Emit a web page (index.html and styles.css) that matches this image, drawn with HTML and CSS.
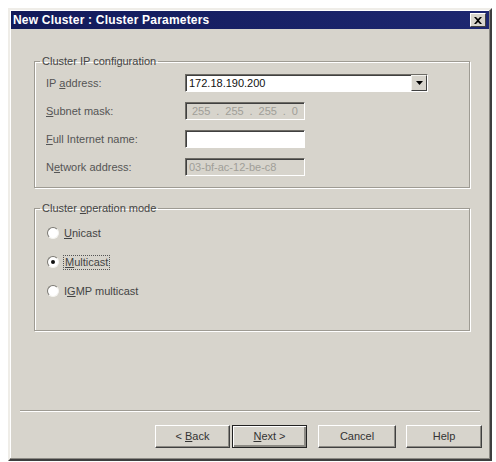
FILE: index.html
```html
<html>

<head>
  <meta charset="utf8">
  <title>New Cluster : Cluster Parameters</title>
  <link rel="stylesheet" href="styles.css">
</head>

<body>
  <div class="window">
    <div class="titlebar">
      <span class="title">New Cluster : Cluster Parameters</span>
      <span class="close">
        <svg width="8" height="7" viewBox="0 0 8 7"><path d="M0 0h2l2 2 2-2h2L5 3.5 8 7H6L4 5 2 7H0l3-3.5z" fill="#000"/></svg>
      </span>
    </div>
    <div class="content">
      <fieldset class="group">
        <legend>Cluster IP configuration</legend>
        <div class="rows">
          <label>IP <u>a</u>ddress:</label>
          <div class="combo">
            <span class="value">172.18.190.200</span>
            <span class="drop"><svg width="7" height="4" viewBox="0 0 7 4"><path d="M0 0h7L3.5 4z" fill="#000"/></svg></span>
          </div>
          <label><u>S</u>ubnet mask:</label>
          <div class="field disabled ip"><span>255</span>.<span>255</span>.<span>255</span>.<span>0</span></div>
          <label><u>F</u>ull Internet name:</label>
          <div class="field"></div>
          <label>N<u>e</u>twork address:</label>
          <div class="field disabled">03-bf-ac-12-be-c8</div>
        </div>
      </fieldset>
      <fieldset class="group modes">
        <legend>Cluster <u>o</u>peration mode</legend>
        <div class="radios">
          <div class="radio"><span class="dot"></span><span><u>U</u>nicast</span></div>
          <div class="radio checked"><span class="dot"></span><span class="focus"><u>M</u>ulticast</span></div>
          <div class="radio"><span class="dot"></span><span>I<u>G</u>MP multicast</span></div>
        </div>
      </fieldset>
      <div class="spacer"></div>
      <hr class="separator">
      <div class="buttons">
        <button class="back">&lt; <u>B</u>ack</button>
        <button class="default"><u>N</u>ext &gt;</button>
        <button class="cancel">Cancel</button>
        <button class="help">Help</button>
      </div>
    </div>
  </div>
</body>

</html>
```

FILE: styles.css
```css
body {
  margin: 0;
  background: #FFF;
  font: 11px/13px "Liberation Sans", Arial, sans-serif;
  color: #222;
}

.window {
  box-sizing: border-box;
  width: 484px;
  height: 453px;
  margin: 8px 0 0 8px;
  padding: 1px;
  display: flex;
  flex-direction: column;
  background: #D7D4CC;
  border: 2px solid;
  border-color: #EFEDE8 #3E3E3E #3E3E3E #EFEDE8;
  box-shadow: inset -1px -1px 0 #8C8A84, inset 1px 1px 0 #FFF;
}

.titlebar {
  height: 18px;
  display: flex;
  align-items: center;
  justify-content: space-between;
  padding: 0 3px 0 2px;
  background: linear-gradient(to right, #121A5A, #1D2770);
  color: #FFF;
}

.title {
  font-weight: bold;
  font-size: 12px;
  letter-spacing: 0.2px;
}

.close {
  box-sizing: border-box;
  width: 16px;
  height: 14px;
  display: flex;
  align-items: center;
  justify-content: center;
  background: #D7D4CC;
  border: 1px solid;
  border-color: #FFF #404040 #404040 #FFF;
}

.content {
  flex: 1;
  display: flex;
  flex-direction: column;
}

.group {
  margin: 26px 19px 0 23px;
  padding: 0;
  border: 1px solid #9E9B93;
  box-shadow: 1px 1px 0 #FFF, inset 1px 1px 0 #FFF;
  color: #444;
}

.group legend {
  margin-left: 5px;
  padding: 0 2px;
}

.rows {
  display: grid;
  grid-template-columns: 139px 243px;
  grid-auto-rows: 18px;
  row-gap: 10px;
  align-items: center;
  padding: 6px 0 11px 11px;
}

.rows label {
  color: #555;
}

.field,
.combo {
  box-sizing: border-box;
  height: 18px;
  width: 120px;
  padding: 0 3px;
  display: flex;
  align-items: center;
  background: #FFF;
  border: 1px solid;
  border-color: #6E6C66 #FFF #FFF #6E6C66;
  box-shadow: inset 1px 1px 0 #404040;
}

.combo {
  width: 243px;
  padding-right: 0;
  justify-content: space-between;
  color: #111;
}

.drop {
  box-sizing: border-box;
  width: 16px;
  height: 16px;
  display: flex;
  align-items: center;
  justify-content: center;
  background: #D7D4CC;
  border: 1px solid;
  border-color: #F4F3EF #404040 #404040 #F4F3EF;
}

.field.disabled {
  background: #D7D4CC;
  color: #A09E98;
}

.field.ip {
  justify-content: space-around;
}

.modes {
  margin-top: 14px;
}

.radios {
  display: flex;
  flex-direction: column;
  gap: 13px;
  padding: 10px 0 31px 12px;
}

.radio {
  height: 16px;
  display: flex;
  align-items: center;
  gap: 5px;
  color: #444;
}

.radio .dot {
  box-sizing: border-box;
  width: 12px;
  height: 12px;
  border-radius: 50%;
  background: #FFF;
  border: 1px solid;
  border-color: #7A7872 #F4F3EF #F4F3EF #7A7872;
  display: flex;
  align-items: center;
  justify-content: center;
}

.radio.checked .dot::after {
  content: "";
  width: 4px;
  height: 4px;
  border-radius: 50%;
  background: #111;
}

.focus {
  outline: 1px dotted #555;
  outline-offset: 0;
  padding: 0 1px;
}

.spacer {
  flex: 1;
}

.separator {
  margin: 0 9px;
  border: 0;
  border-top: 1px solid #9E9B93;
  border-bottom: 1px solid #FFF;
}

.buttons {
  display: flex;
  justify-content: flex-end;
  gap: 2px;
  padding: 13px 7px 10px 0;
}

.buttons button {
  box-sizing: border-box;
  width: 75px;
  height: 23px;
  padding: 0;
  font: inherit;
  color: #333;
  background: #D7D4CC;
  border: 1px solid;
  border-color: #FFF #404040 #404040 #FFF;
  box-shadow: inset -1px -1px 0 #8C8A84;
}

.buttons .default {
  border: 1px solid #222;
  box-shadow: inset 1px 1px 0 #FFF, inset -2px -2px 0 #8C8A84;
}

.buttons .cancel {
  width: 78px;
  margin-left: 9px;
}

.buttons .help {
  width: 76px;
  margin-left: 8px;
}
```
